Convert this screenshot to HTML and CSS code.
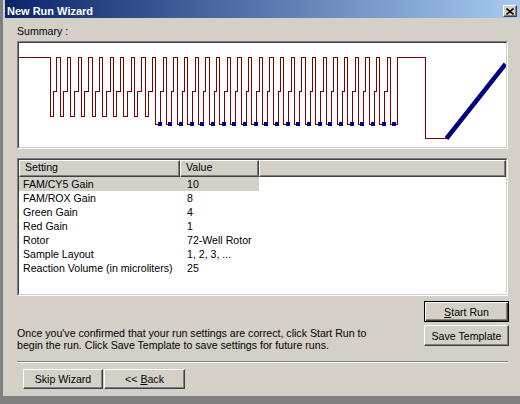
FILE: index.html
```html
<!DOCTYPE html>
<html>
<head>
<meta charset="utf-8">
<title>New Run Wizard</title>
<link rel="stylesheet" href="styles.css">
</head>
<body>
<div class="window">
  <div class="titlebar">
    <span class="title">New Run Wizard</span>
    <span class="close"><svg width="8" height="7" viewBox="0 0 8 7"><path d="M0.5,0.5L7.5,6.5M7.5,0.5L0.5,6.5" stroke="#000" stroke-width="1.6"/></svg></span>
  </div>
  <div class="content">
    <div class="label">Summary :</div>
    <div class="sunken chart">
      <div class="sunken-inner chart-inner">
        <svg width="487" height="104" viewBox="19 43 487 104">
          <path fill="none" stroke="#800000" stroke-width="1" shape-rendering="crispEdges" d="M19,57H50.7V116H53.3V91H56.7V57h3.33v59h3.33v-25h4v-34h3.33v59h3.33v-25h4v-34h3.33v59h3.33v-25h4v-34h3.33v59h3.33v-25h4v-34h3.33v59h3.33v-25h4v-34h3.33v59h3.33v-25h4v-34h3.33v59h3.33v-25h4v-34h3.33v59h3.33v-25h4v-34h3.33v59h3.33v-25h4v-34h3.33v67h5v-33h2.33v-34h3.33v67h5v-33h2.33v-34h3.33v67h5v-33h2.33v-34h3.33v67h5v-33h2.33v-34h3.33v67h5v-33h2.33v-34h3.33v67h5v-33h2.33v-34h3.33v67h5v-33h2.33v-34h3.33v67h5v-33h2.33v-34h3.33v67h5v-33h2.33v-34h3.33v67h5v-33h2.33v-34h3.33v67h5v-33h2.33v-34h3.33v67h5v-33h2.33v-34h3.33v67h5v-33h2.33v-34h3.33v67h5v-33h2.33v-34h3.33v67h5v-33h2.33v-34h3.33v67h5v-33h2.33v-34h3.33v67h5v-33h2.33v-34h3.33v67h5v-33h2.33v-34h3.33v67h5v-33h2.33v-34h3.33v67h5v-33h2.33v-34h3.33v67h5v-33h2.33v-34h3.33v67h5v-33h2.33v-34h3.33v67h6.6V57H425.3V138.5H446.5"/>
          <line x1="157.5" y1="124" x2="396.17" y2="124" stroke="#000080" stroke-width="4" stroke-dasharray="4 6.667" shape-rendering="crispEdges"/>
          <line x1="446.5" y1="138.5" x2="505.5" y2="64" stroke="#000080" stroke-width="4.5"/>
        </svg>
      </div>
    </div>
    <div class="sunken list">
      <div class="sunken-inner list-inner">
        <div class="header">
          <div class="hcell c1">Setting</div>
          <div class="hcell c2">Value</div>
          <div class="hcell fill"></div>
        </div>
        <div class="row selected"><div class="cell c1">FAM/CY5 Gain</div><div class="cell c2">10</div></div>
        <div class="row"><div class="cell c1">FAM/ROX Gain</div><div class="cell c2">8</div></div>
        <div class="row"><div class="cell c1">Green Gain</div><div class="cell c2">4</div></div>
        <div class="row"><div class="cell c1">Red Gain</div><div class="cell c2">1</div></div>
        <div class="row"><div class="cell c1">Rotor</div><div class="cell c2">72-Well Rotor</div></div>
        <div class="row"><div class="cell c1">Sample Layout</div><div class="cell c2">1, 2, 3, ...</div></div>
        <div class="row"><div class="cell c1">Reaction Volume (in microliters)</div><div class="cell c2">25</div></div>
      </div>
    </div>
    <div class="actions">
      <p class="desc">Once you've confirmed that your run settings are correct, click Start Run to<br>begin the run. Click Save Template to save settings for future runs.</p>
      <div class="btncol">
        <button class="btn default"><u>S</u>tart Run</button>
        <button class="btn">Save Template</button>
      </div>
    </div>
    <div class="sep"></div>
    <div class="footer">
      <button class="btn skip">Skip Wizard</button>
      <button class="btn back">&lt;&lt; <u>B</u>ack</button>
    </div>
  </div>
</div>
</body>
</html>
```
FILE: styles.css
```css
* { box-sizing: border-box; }
html, body { margin: 0; padding: 0; }
body {
  background: #808080;
  font-family: "Liberation Sans", Arial, sans-serif;
  font-size: 10.6px;
  color: #000;
  width: 520px;
  height: 404px;
  overflow: hidden;
}
.window {
  margin-left: 3px;
  width: 517px;
  height: 396px;
  background: #d4d0c8;
  border-left: 2px solid #d4d0c8;
  display: flex;
  flex-direction: column;
}
.titlebar {
  height: 18px;
  padding: 4px 3px 0 2px;
  display: flex;
  align-items: center;
  justify-content: space-between;
  background: linear-gradient(to right, #0a246a, #a6caf0);
}
.title {
  color: #fff;
  font-weight: bold;
  font-size: 11px;
  line-height: 13px;
}
.close {
  width: 14px;
  height: 12px;
  background: #d4d0c8;
  border: 1px solid;
  border-color: #fff #404040 #404040 #fff;
  box-shadow: inset -1px -1px #808080;
  display: flex;
  align-items: center;
  justify-content: center;
}
.close svg { display: block; }
.content { padding: 7px 12px 0 12px; }
.label { line-height: 13px; height: 13px; }
.sunken {
  border: 1px solid;
  border-color: #808080 #fff #fff #808080;
}
.sunken-inner {
  border: 1px solid;
  border-color: #404040 #d4d0c8 #d4d0c8 #404040;
  height: 100%;
  overflow: hidden;
}
.chart { margin-top: 3px; height: 108px; }
.chart-inner { background: #fff; }
.chart svg { display: block; }
.list { margin-top: 9px; height: 138px; }
.list-inner { background: #fff; }
.header { display: flex; height: 17px; }
.hcell {
  background: #d4d0c8;
  border: 1px solid;
  border-color: #fff #404040 #404040 #fff;
  box-shadow: inset -1px -1px #808080;
  line-height: 13px;
  padding-left: 5px;
}
.c1 { width: 161px; flex: none; }
.c2 { width: 79px; flex: none; }
.fill { flex: 1; }
.row { display: flex; height: 14px; line-height: 14px; }
.cell { white-space: nowrap; }
.cell.c1 { padding-left: 4px; }
.cell.c2 { padding-left: 7px; }
.row.selected .cell { background: #d4d0c8; }
.actions {
  display: flex;
  justify-content: space-between;
  margin-top: 5px;
  height: 45px;
}
.desc { margin: 26px 0 0 0; line-height: 12px; }
.btncol {
  display: flex;
  flex-direction: column;
  gap: 3px;
  margin-right: -1px;
}
.btn {
  font: inherit;
  color: #000;
  background: #d4d0c8;
  border: 1px solid;
  border-color: #fff #404040 #404040 #fff;
  box-shadow: inset -1px -1px #808080;
  padding: 0;
  margin: 0;
}
.btncol .btn { width: 85px; height: 21px; }
.btn.default {
  border-color: #000;
  box-shadow: inset 1px 1px #fff, inset -1px -1px #404040, inset -2px -2px #808080;
}
.sep {
  margin-top: 15px;
  border-top: 1px solid #808080;
  border-bottom: 1px solid #fff;
}
.footer {
  margin-top: 6px;
  padding-left: 6px;
  display: flex;
  gap: 1px;
}
.footer .btn { height: 20px; }
.skip { width: 80px; }
.back { width: 81px; }
```
